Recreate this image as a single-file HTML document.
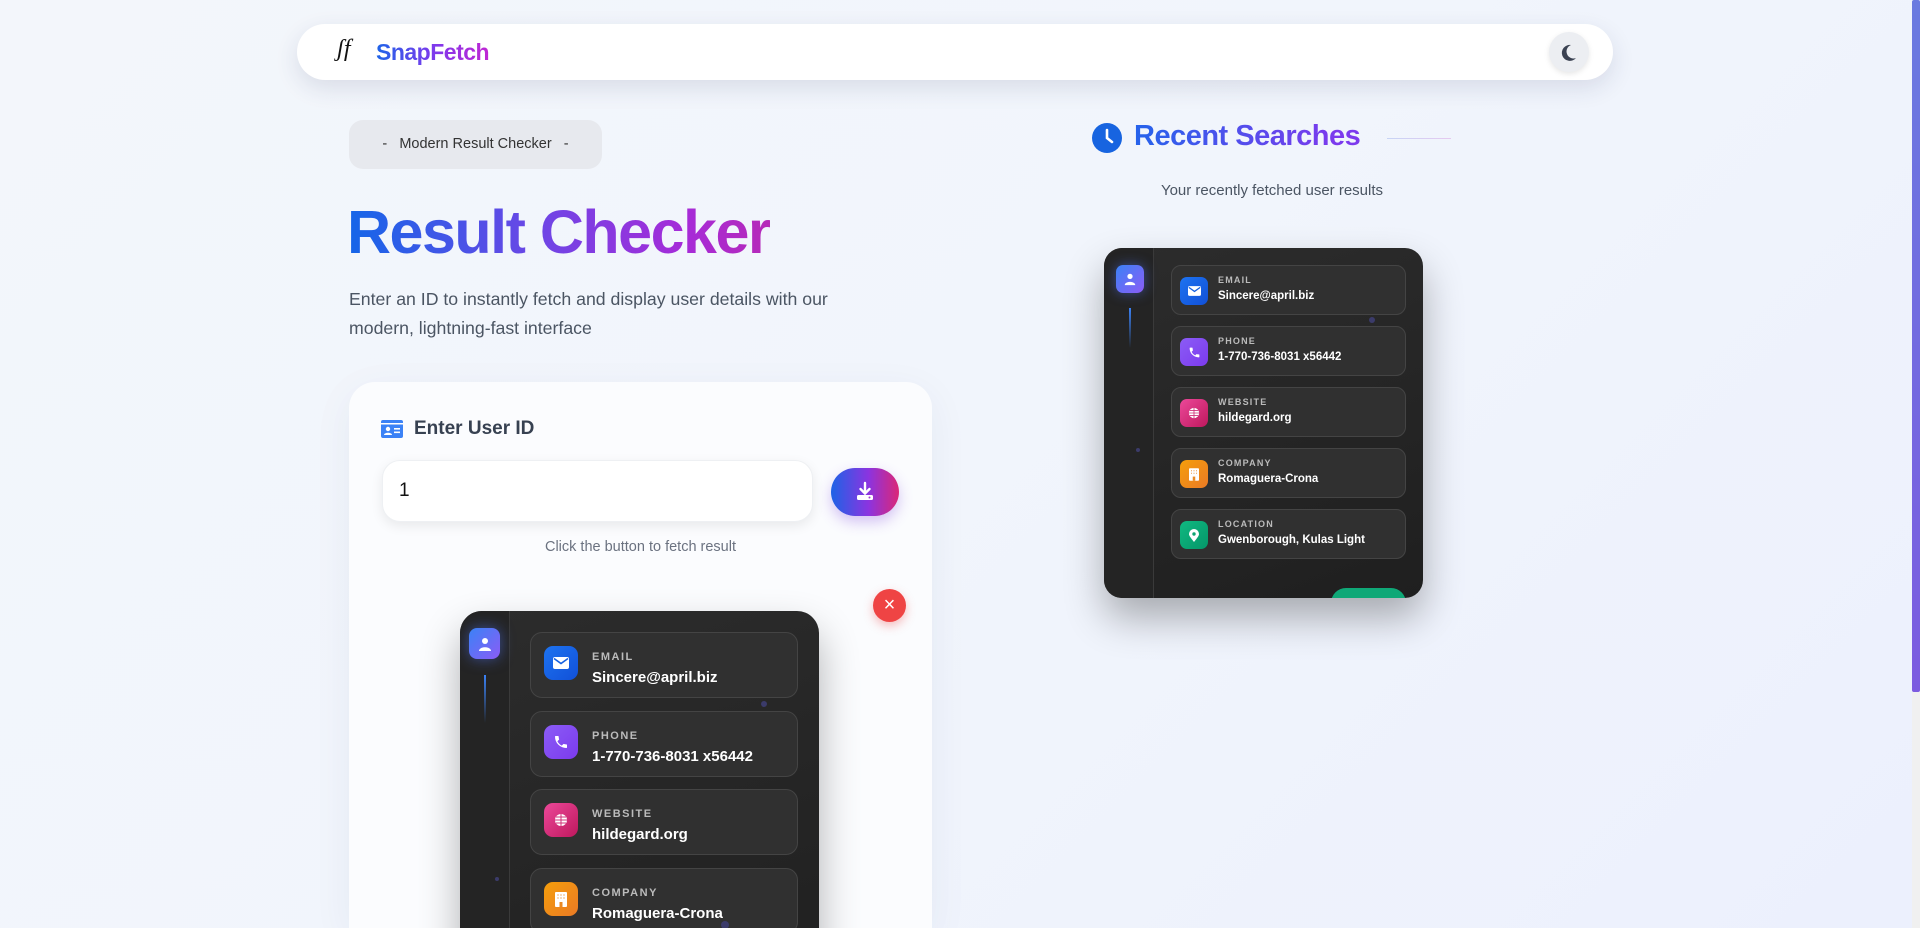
<!DOCTYPE html>
<html><head><meta charset="utf-8">
<style>
*{box-sizing:border-box;margin:0;padding:0}
html,body{width:1920px;height:928px;overflow:hidden}
body{font-family:"Liberation Sans",sans-serif;background:linear-gradient(135deg,#f3f6fb 0%,#f1f5fc 50%,#ecf0fd 100%);position:relative}
.abs{position:absolute}
.grad{background-image:linear-gradient(90deg,#1d64e8,#7c3aed,#c026d3);-webkit-background-clip:text;background-clip:text;color:transparent;-webkit-text-fill-color:transparent}
.nav{left:297px;top:24px;width:1316px;height:56px;background:#fff;border-radius:28px;box-shadow:0 8px 24px rgba(30,40,80,.12)}
.card{left:349px;top:382px;width:583px;height:546px;background:#fbfcfe;border-radius:26px 26px 0 0;box-shadow:0 10px 40px rgba(30,50,100,.06);overflow:hidden}
.dark{background:linear-gradient(160deg,#2c2c2c,#1f1f1f);box-shadow:0 20px 40px rgba(0,0,0,.3);overflow:hidden}
.side{position:absolute;left:0;top:0;bottom:0;border-right:1px solid #3a3a3a;background:#242424}
.item{position:absolute;border:1px solid #444;background:#303030;}
.ic{position:absolute;display:flex;align-items:center;justify-content:center}
.lab{position:absolute;color:#bbb;font-weight:bold;letter-spacing:1.5px}
.val{position:absolute;color:#fff;font-weight:bold}
</style></head><body>
<div class="abs" style="left:1912px;top:0;width:8px;height:692px;background:linear-gradient(#6a7ae0,#7c5be0);border-radius:2px"></div>
<div class="abs" style="left:1912px;top:692px;width:8px;height:236px;background:#f0f0f0"></div>

<div class="abs nav">
  <div class="abs" style="left:40px;top:12px;font-family:'Liberation Serif',serif;font-style:italic;font-size:24px;color:#111">ʃf</div>
  <div class="abs grad" style="left:79px;top:15px;font-size:23px;font-weight:bold;letter-spacing:-.5px">SnapFetch</div>
  <div class="abs" style="left:1252px;top:8px;width:40px;height:40px;border-radius:50%;background:#eceef2;box-shadow:0 2px 6px rgba(0,0,0,.1)">
    <svg width="40" height="40" viewBox="0 0 40 40"><path d="M22 13a8 8 0 1 0 5 13a6.5 6.5 0 0 1-5-13z" fill="#3b4252"/></svg>
  </div>
</div>

<div class="abs" style="left:349px;top:120px;width:253px;height:49px;background:#e7e9ee;border-radius:14px;font-size:14.5px;color:#333;line-height:49px;text-align:center">-&nbsp;&nbsp;&nbsp;Modern Result Checker&nbsp;&nbsp;&nbsp;-</div>

<div class="abs grad" style="left:347px;top:196px;font-size:61px;font-weight:bold;letter-spacing:-1.5px;line-height:72px;background-image:linear-gradient(90deg,#1466e8,#6d46e6 45%,#a62bd8 80%,#b62ab8)">Result Checker</div>

<div class="abs" style="left:349px;top:285px;width:540px;font-size:17.7px;line-height:29px;color:#4b5563">Enter an ID to instantly fetch and display user details with our modern, lightning-fast interface</div>

<div class="abs card">
  <svg class="abs" style="left:32px;top:38px" width="22" height="18" viewBox="0 0 22 18"><rect width="22" height="18" rx="2" fill="#3b82f6"/><rect x="0" y="3" width="22" height="1.5" fill="#fff"/><circle cx="7" cy="9" r="2.2" fill="#fff"/><path d="M3 15c0-3 8-3 8 0z" fill="#fff"/><rect x="13" y="8" width="6" height="1.6" fill="#fff"/><rect x="13" y="11.5" width="6" height="1.6" fill="#fff"/></svg>
  <div class="abs" style="left:65px;top:36px;font-size:19px;font-weight:bold;color:#374151">Enter User ID</div>
  <div class="abs" style="left:33px;top:78px;width:431px;height:62px;background:#fff;border-radius:18px;box-shadow:0 4px 12px rgba(0,0,0,.08);border:1px solid #eef0f3"></div>
  <div class="abs" style="left:50px;top:98px;font-size:19px;color:#111">1</div>
  <div class="abs" style="left:482px;top:86px;width:68px;height:48px;border-radius:24px;background:linear-gradient(90deg,#1d63e6,#8b34e0 55%,#db2777);box-shadow:0 6px 14px rgba(120,60,220,.3)">
    <svg class="abs" style="left:22px;top:12px" width="24" height="24" viewBox="0 0 24 24"><path d="M12 3v10M7.5 9l4.5 4.5L16.5 9" stroke="#fff" stroke-width="2.4" fill="none" stroke-linecap="round"/><rect x="4" y="15" width="16" height="5" rx="1.5" fill="#fff"/><circle cx="16.5" cy="17.5" r="1" fill="#a23bd0"/></svg>
  </div>
  <div class="abs" style="left:0;width:583px;top:157px;text-align:center;font-size:14.5px;color:#6b7280;padding-left:0">Click the button to fetch result</div>
  <div class="abs" style="left:524px;top:207px;width:33px;height:33px;border-radius:50%;background:#ef4444;color:#fff;font-size:20px;text-align:center;line-height:32px;box-shadow:0 4px 10px rgba(239,68,68,.35)">×</div>

  <div class="abs dark" style="left:111px;top:229px;width:359px;height:420px;border-radius:22px">
    <div class="side" style="width:50px"></div>
    <div class="ic" style="left:9px;top:17px;width:31px;height:31px;border-radius:8px;background:linear-gradient(135deg,#3b82f6,#8b5cf6);box-shadow:0 0 14px rgba(80,120,255,.5)"><svg width="16" height="16" viewBox="0 0 16 16"><circle cx="8" cy="5" r="3" fill="#fff"/><path d="M2 15c0-5 12-5 12 0z" fill="#fff"/></svg></div>
    <div class="abs" style="left:24px;top:64px;width:2px;height:48px;background:linear-gradient(#3b82f6,transparent)"></div>
    <div class="abs" style="left:35px;top:266px;width:4px;height:4px;border-radius:50%;background:#3b3b6a"></div>
    <div class="abs" style="left:301px;top:90px;width:6px;height:6px;border-radius:50%;background:#3b3b6a"></div>

    <div class="item" style="left:70px;top:21px;width:268px;height:66px;border-radius:12px"></div>
    <div class="ic" style="left:84px;top:35px;width:34px;height:34px;border-radius:9px;background:linear-gradient(135deg,#1d73f0,#1150d8)"><svg width="16" height="12" viewBox="0 0 16 12"><rect width="16" height="12" rx="2" fill="#fff"/><path d="M1 1.5l7 5 7-5" stroke="#1560e0" stroke-width="1.6" fill="none"/></svg></div>
    <div class="lab" style="left:132px;top:40px;font-size:11px">EMAIL</div>
    <div class="val" style="left:132px;top:58px;font-size:15px">Sincere@april.biz</div>

    <div class="item" style="left:70px;top:100px;width:268px;height:66px;border-radius:12px"></div>
    <div class="ic" style="left:84px;top:114px;width:34px;height:34px;border-radius:9px;background:linear-gradient(135deg,#8b5cf6,#7c3aed)"><svg width="16" height="16" viewBox="0 0 24 24"><path d="M6.6 10.8a15 15 0 0 0 6.6 6.6l2.2-2.2a1 1 0 0 1 1-.25 11 11 0 0 0 3.6.6 1 1 0 0 1 1 1V20a1 1 0 0 1-1 1A17 17 0 0 1 3 4a1 1 0 0 1 1-1h3.5a1 1 0 0 1 1 1 11 11 0 0 0 .6 3.6 1 1 0 0 1-.25 1z" fill="#fff"/></svg></div>
    <div class="lab" style="left:132px;top:119px;font-size:11px">PHONE</div>
    <div class="val" style="left:132px;top:137px;font-size:15px">1-770-736-8031 x56442</div>

    <div class="item" style="left:70px;top:178px;width:268px;height:66px;border-radius:12px"></div>
    <div class="ic" style="left:84px;top:192px;width:34px;height:34px;border-radius:9px;background:linear-gradient(135deg,#ec4899,#be185d)"><svg width="14" height="14" viewBox="0 0 14 14"><circle cx="7" cy="7" r="6" fill="#fff"/><path d="M1 7h12M7 1v12M2 4h10M2 10h10" stroke="#d0307a" stroke-width="1"/></svg></div>
    <div class="lab" style="left:132px;top:197px;font-size:11px">WEBSITE</div>
    <div class="val" style="left:132px;top:215px;font-size:15px">hildegard.org</div>

    <div class="item" style="left:70px;top:257px;width:268px;height:66px;border-radius:12px"></div>
    <div class="ic" style="left:84px;top:271px;width:34px;height:34px;border-radius:9px;background:linear-gradient(135deg,#f59e0b,#ea7a25)"><svg width="12" height="15" viewBox="0 0 12 15"><rect width="12" height="15" rx="1" fill="#fff"/><rect x="4.5" y="10" width="3" height="5" fill="#ea8a25"/><path d="M2.5 3h1M5.5 3h1M8.5 3h1M2.5 6h1M5.5 6h1M8.5 6h1" stroke="#ea8a25" stroke-width="1.2"/></svg></div>
    <div class="lab" style="left:132px;top:276px;font-size:11px">COMPANY</div>
    <div class="val" style="left:132px;top:294px;font-size:15px">Romaguera-Crona</div>
    <div class="abs" style="left:261px;top:310px;width:8px;height:8px;border-radius:50%;background:#3b3b6a"></div>
  </div>
</div>

<!-- right -->
<svg class="abs" style="left:1092px;top:123px" width="30" height="30" viewBox="0 0 30 30"><circle cx="15" cy="15" r="15" fill="#1764e0"/><path d="M15 7v8l5 4" stroke="#fff" stroke-width="2.6" fill="none" stroke-linecap="round"/></svg>
<div class="abs grad" style="left:1134px;top:120px;font-size:29px;font-weight:bold;letter-spacing:-.5px;background-image:linear-gradient(90deg,#2563eb,#7c3aed 90%)">Recent Searches</div>
<div class="abs" style="left:1387px;top:138px;width:64px;height:1px;background:linear-gradient(90deg,#c7d4f5,#e5c9f0)"></div>
<div class="abs" style="left:1100px;width:344px;top:182px;text-align:center;font-size:15px;color:#4b5563">Your recently fetched user results</div>

<div class="abs dark" style="left:1104px;top:248px;width:319px;height:350px;border-radius:18px">
  <div class="side" style="width:50px"></div>
  <div class="ic" style="left:12px;top:17px;width:28px;height:28px;border-radius:7px;background:linear-gradient(135deg,#3b82f6,#8b5cf6);box-shadow:0 0 12px rgba(80,120,255,.5)"><svg width="14" height="14" viewBox="0 0 16 16"><circle cx="8" cy="5" r="3" fill="#fff"/><path d="M2 15c0-5 12-5 12 0z" fill="#fff"/></svg></div>
  <div class="abs" style="left:25px;top:60px;width:2px;height:40px;background:linear-gradient(#3b82f6,transparent)"></div>
  <div class="abs" style="left:32px;top:200px;width:4px;height:4px;border-radius:50%;background:#3b3b6a"></div>
  <div class="abs" style="left:265px;top:69px;width:6px;height:6px;border-radius:50%;background:#3b3b6a"></div>
  <div class="abs" style="left:233px;top:233px;width:8px;height:8px;border-radius:50%;background:#3b3b6a"></div>

  <div class="item" style="left:67px;top:17px;width:235px;height:50px;border-radius:10px"></div>
  <div class="ic" style="left:76px;top:29px;width:28px;height:28px;border-radius:7px;background:linear-gradient(135deg,#1d73f0,#1150d8)"><svg width="13" height="10" viewBox="0 0 16 12"><rect width="16" height="12" rx="2" fill="#fff"/><path d="M1 1.5l7 5 7-5" stroke="#1560e0" stroke-width="1.6" fill="none"/></svg></div>
  <div class="lab" style="left:114px;top:27px;font-size:9px;letter-spacing:1.2px">EMAIL</div>
  <div class="val" style="left:114px;top:42px;font-size:11.5px">Sincere@april.biz</div>

  <div class="item" style="left:67px;top:78px;width:235px;height:50px;border-radius:10px"></div>
  <div class="ic" style="left:76px;top:90px;width:28px;height:28px;border-radius:7px;background:linear-gradient(135deg,#8b5cf6,#7c3aed)"><svg width="13" height="13" viewBox="0 0 24 24"><path d="M6.6 10.8a15 15 0 0 0 6.6 6.6l2.2-2.2a1 1 0 0 1 1-.25 11 11 0 0 0 3.6.6 1 1 0 0 1 1 1V20a1 1 0 0 1-1 1A17 17 0 0 1 3 4a1 1 0 0 1 1-1h3.5a1 1 0 0 1 1 1 11 11 0 0 0 .6 3.6 1 1 0 0 1-.25 1z" fill="#fff"/></svg></div>
  <div class="lab" style="left:114px;top:88px;font-size:9px;letter-spacing:1.2px">PHONE</div>
  <div class="val" style="left:114px;top:103px;font-size:11.5px">1-770-736-8031 x56442</div>

  <div class="item" style="left:67px;top:139px;width:235px;height:50px;border-radius:10px"></div>
  <div class="ic" style="left:76px;top:151px;width:28px;height:28px;border-radius:7px;background:linear-gradient(135deg,#ec4899,#be185d)"><svg width="12" height="12" viewBox="0 0 14 14"><circle cx="7" cy="7" r="6" fill="#fff"/><path d="M1 7h12M7 1v12M2 4h10M2 10h10" stroke="#d0307a" stroke-width="1"/></svg></div>
  <div class="lab" style="left:114px;top:149px;font-size:9px;letter-spacing:1.2px">WEBSITE</div>
  <div class="val" style="left:114px;top:164px;font-size:11.5px">hildegard.org</div>

  <div class="item" style="left:67px;top:200px;width:235px;height:50px;border-radius:10px"></div>
  <div class="ic" style="left:76px;top:212px;width:28px;height:28px;border-radius:7px;background:linear-gradient(135deg,#f59e0b,#ea7a25)"><svg width="10" height="13" viewBox="0 0 12 15"><rect width="12" height="15" rx="1" fill="#fff"/><rect x="4.5" y="10" width="3" height="5" fill="#ea8a25"/><path d="M2.5 3h1M5.5 3h1M8.5 3h1M2.5 6h1M5.5 6h1M8.5 6h1" stroke="#ea8a25" stroke-width="1.2"/></svg></div>
  <div class="lab" style="left:114px;top:210px;font-size:9px;letter-spacing:1.2px">COMPANY</div>
  <div class="val" style="left:114px;top:225px;font-size:11.5px">Romaguera-Crona</div>

  <div class="item" style="left:67px;top:261px;width:235px;height:50px;border-radius:10px"></div>
  <div class="ic" style="left:76px;top:273px;width:28px;height:28px;border-radius:7px;background:linear-gradient(135deg,#10b981,#059669)"><svg width="10" height="13" viewBox="0 0 10 13"><path d="M5 13C1 8 0 6.5 0 5a5 5 0 0 1 10 0c0 1.5-1 3-5 8z" fill="#fff"/><circle cx="5" cy="5" r="1.7" fill="#0ea472"/></svg></div>
  <div class="lab" style="left:114px;top:271px;font-size:9px;letter-spacing:1.2px">LOCATION</div>
  <div class="val" style="left:114px;top:286px;font-size:11.5px">Gwenborough, Kulas Light</div>

  <div class="abs" style="left:227px;top:340px;width:75px;height:30px;border-radius:15px;background:#0fa877"></div>
</div>
</body></html>
